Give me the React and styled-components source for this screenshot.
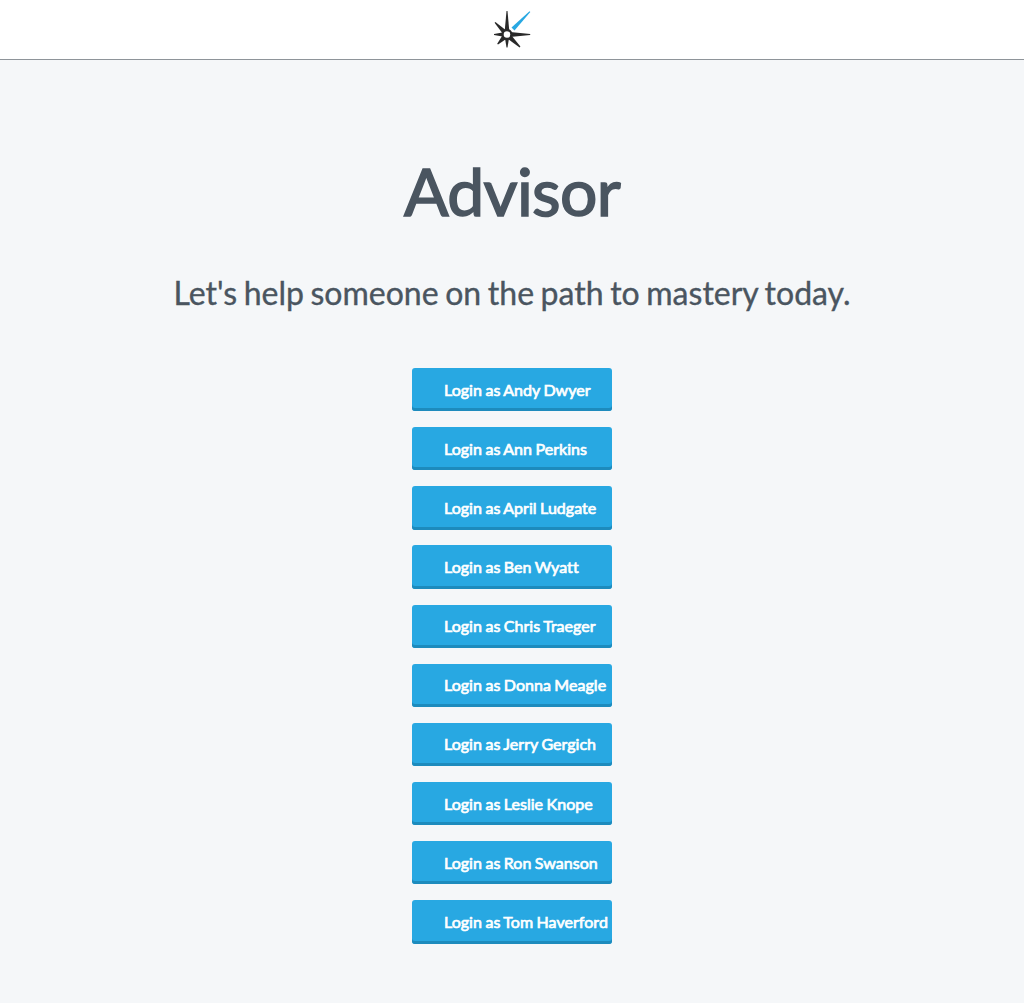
import React from 'react';
import styled, { createGlobalStyle } from 'styled-components';

const GlobalStyle = createGlobalStyle`
  * { box-sizing: border-box; }
  body {
    margin: 0;
    background: #f5f7f9;
    color: #4a5560;
    font-family: Lato, "Open Sans", sans-serif;
  }
`;

const Page = styled.div`
  min-height: 1003px;
  display: flex;
  flex-direction: column;
`;

const Header = styled.header`
  height: 60px;
  display: flex;
  justify-content: center;
  background: #fff;
  border-bottom: 1px solid #8e9499;
`;

const Logo = styled.svg`
  width: 60px;
  height: 59px;
  display: block;
`;

const Main = styled.main`
  display: flex;
  flex-direction: column;
  align-items: center;
  padding-top: 91px;
`;

const Title = styled.h1`
  margin: 0;
  font-size: 66px;
  line-height: 80px;
  font-weight: 400;
  letter-spacing: -0.7px;
  -webkit-text-stroke: 1.6px currentColor;
`;

const Tagline = styled.p`
  margin: 42px 0 55px;
  font-size: 32px;
  line-height: 40px;
  word-spacing: -1.6px;
  -webkit-text-stroke: 0.35px currentColor;
  white-space: nowrap;
`;

const LoginList = styled.div`
  display: flex;
  flex-direction: column;
  gap: 15.95px;
`;

const LoginButton = styled.button`
  width: 200px;
  height: 43.22px;
  padding: 0 0 0.15px 32px;
  border: 0;
  border-radius: 3px;
  background: #28a8e2;
  box-shadow: inset 0 -3px 0 #1d8bbd;
  color: #fff;
  font: 400 16px/42px Lato, "Open Sans", sans-serif;
  word-spacing: -0.7px;
  letter-spacing: 0.04px;
  -webkit-text-stroke: 0.7px currentColor;
  text-align: left;
  white-space: nowrap;
`;

const advisees = [
  'Andy Dwyer', 'Ann Perkins', 'April Ludgate', 'Ben Wyatt', 'Chris Traeger',
  'Donna Meagle', 'Jerry Gergich', 'Leslie Knope', 'Ron Swanson', 'Tom Haverford',
];

function CompassLogo() {
  return (
    <Logo viewBox="0 0 60 59" aria-label="Compass">
      <g fill="#292929">
        <path d="M24.5 11 H25.5 L27.2 30 H22.8 Z" />
        <path d="M48.2 34 V35 L28 37 V32 Z" />
        <path d="M24.5 47.5 L22.8 37 H27.2 L25.5 47.5 Z" />
        <path d="M12 34 L22 32.2 V36.8 L12 35 Z" />
        <path d="M12.6 22.8 L13.4 22 L24.3 30.4 L20.8 33.8 Z" />
        <path d="M37.6 47.4 L38.4 46.6 L29.5 35.5 L26 39 Z" />
        <path d="M15.2 43.8 L16 44.6 L24.2 39 L20.5 35.3 Z" />
      </g>
      <circle cx="25" cy="34.5" r="4.4" fill="#fff" stroke="#292929" strokeWidth="2.2" />
      <path d="M47.5 11.3 L48.3 12.1 L32.5 30.4 L29.5 27.4 Z" fill="#28a8e2" />
    </Logo>
  );
}

export default function App() {
  return (
    <Page>
      <GlobalStyle />
      <Header><CompassLogo /></Header>
      <Main>
        <Title>Advisor</Title>
        <Tagline>Let's help someone on the path to mastery today.</Tagline>
        <LoginList>
          {advisees.map((name) => (
            <LoginButton key={name} type="button">Login as {name}</LoginButton>
          ))}
        </LoginList>
      </Main>
    </Page>
  );
}
